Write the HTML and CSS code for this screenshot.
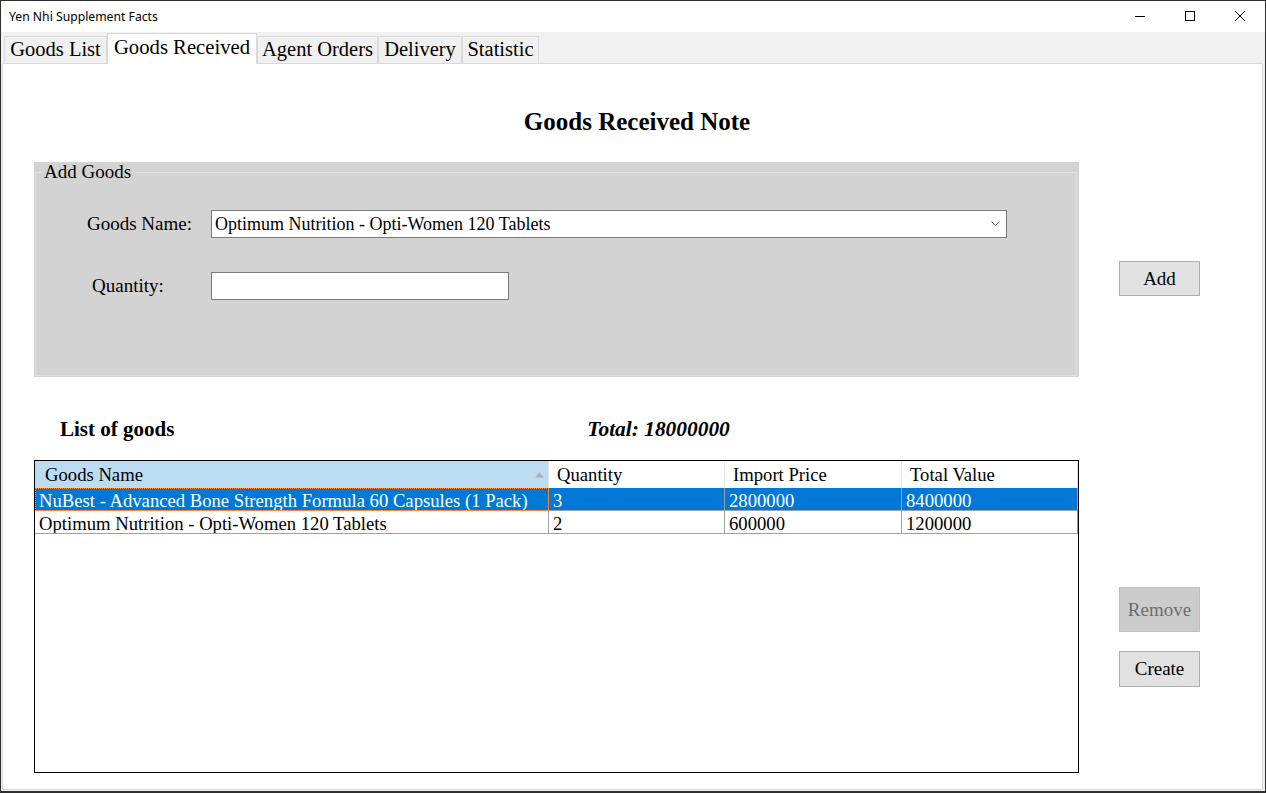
FILE: index.html
```html
<!DOCTYPE html>
<html>
<head>
<meta charset="utf-8">
<title>Yen Nhi Supplement Facts</title>
<link rel="stylesheet" href="styles.css">
</head>
<body>
<div class="window">
  <div class="titlebar">
    <span class="title">Yen Nhi Supplement Facts</span>
    <div class="controls">
      <span class="ctl"><svg width="12" height="12" viewBox="0 0 12 12"><line x1="1" y1="6.5" x2="11" y2="6.5" stroke="#000" stroke-width="1"/></svg></span>
      <span class="ctl"><svg width="12" height="12" viewBox="0 0 12 12"><rect x="1.5" y="1.5" width="9" height="9" fill="none" stroke="#000" stroke-width="1"/></svg></span>
      <span class="ctl"><svg width="12" height="12" viewBox="0 0 12 12"><path d="M1 1 L11 11 M11 1 L1 11" stroke="#000" stroke-width="1"/></svg></span>
    </div>
  </div>
  <div class="tabstrip">
    <div class="tab t1">Goods List</div>
    <div class="tab t2 active">Goods Received</div>
    <div class="tab t3">Agent Orders</div>
    <div class="tab t4">Delivery</div>
    <div class="tab t5">Statistic</div>
  </div>
  <div class="page">
    <h1 class="heading">Goods Received Note</h1>
    <div class="main">
      <div class="left">
        <div class="groupbox">
          <fieldset class="fs">
            <legend class="legend">Add Goods</legend>
            <div class="form">
              <div class="frow r1">
                <label class="lbl">Goods Name:</label>
                <div class="select">
                  <span class="select-text">Optimum Nutrition - Opti-Women 120 Tablets</span>
                  <svg class="chev" width="9" height="6" viewBox="0 0 9 6"><path d="M0.5 0.5 L4.5 4.5 L8.5 0.5" fill="none" stroke="#606060" stroke-width="1"/></svg>
                </div>
              </div>
              <div class="frow r2">
                <label class="lbl lbl-q">Quantity:</label>
                <div class="input"></div>
              </div>
            </div>
          </fieldset>
        </div>
        <div class="listhead">
          <span class="list-title">List of goods</span>
          <span class="total">Total: 18000000</span>
        </div>
        <div class="grid">
          <table class="tbl">
            <colgroup><col class="c1"><col class="c2"><col class="c3"><col class="c4"></colgroup>
            <thead>
              <tr>
                <th class="sorted">Goods Name<svg class="sort" width="9" height="6" viewBox="0 0 9 6"><polygon points="0,5.5 9,5.5 4.5,0.5" fill="#b0b0b0"/></svg></th>
                <th>Quantity</th>
                <th>Import Price</th>
                <th>Total Value</th>
              </tr>
            </thead>
            <tbody>
              <tr class="sel">
                <td class="focus">NuBest - Advanced Bone Strength Formula 60 Capsules (1 Pack)</td>
                <td>3</td>
                <td>2800000</td>
                <td>8400000</td>
              </tr>
              <tr>
                <td>Optimum Nutrition - Opti-Women 120 Tablets</td>
                <td>2</td>
                <td>600000</td>
                <td>1200000</td>
              </tr>
            </tbody>
          </table>
        </div>
      </div>
      <div class="side">
        <button class="btn b-add">Add</button>
        <button class="btn b-remove" disabled>Remove</button>
        <button class="btn b-create">Create</button>
      </div>
    </div>
  </div>
</div>
</body>
</html>
```
FILE: styles.css
```css
* { box-sizing: border-box; }
html, body { margin: 0; padding: 0; background: #fff; }
body { font-family: "Liberation Serif", "Times New Roman", serif; color: #000; }

.window {
  width: 1266px;
  height: 793px;
  border: 1px solid #2e2e2e;
  border-bottom-width: 2px;
  display: flex;
  flex-direction: column;
  background: #f0f0f0;
  overflow: hidden;
}

.titlebar {
  height: 31px;
  flex: 0 0 31px;
  background: #fff;
  display: flex;
  align-items: center;
  justify-content: space-between;
}
.title {
  font-family: "Segoe UI", "Noto Sans", "DejaVu Sans", sans-serif;
  font-size: 12.2px;
  padding-left: 8px;
  padding-bottom: 1px;
  color: #000;
}
.controls { display: flex; height: 100%; }
.ctl {
  width: 50px;
  height: 100%;
  display: flex;
  align-items: center;
  justify-content: center;
  padding-bottom: 1px;
}

.tabstrip {
  height: 31px;
  flex: 0 0 31px;
  display: flex;
  align-items: flex-end;
  padding-left: 3px;
  background: #f0f0f0;
  position: relative;
  z-index: 2;
}
.tab {
  height: 27px;
  border: 1px solid #d9d9d9;
  border-bottom: none;
  background: #f0f0f0;
  font-size: 20.5px;
  line-height: 25px;
  text-align: center;
  white-space: nowrap;
}
.t1 { width: 103px; }
.t2 { width: 150px; }
.t3 { width: 121px; }
.t4 { width: 84px; }
.t5 { width: 77px; }
.tab.active {
  height: 31px;
  margin-bottom: -1px;
  background: #fff;
  line-height: 27px;
  font-size: 20.7px;
}

.page {
  flex: 1;
  background: #fff;
  border: 1px solid #d9d9d9;
  margin: 0 2px 1px 1px;
  padding-left: 31px;
}

.heading {
  margin: 0;
  padding: 44px 0 0 9px;
  margin-left: -31px;
  font-size: 25px;
  line-height: 28px;
  font-weight: bold;
  text-align: center;
  margin-bottom: 26px;
}

.main { display: flex; }
.left { width: 1045px; flex: 0 0 1045px; }

.groupbox {
  background: #d3d3d3;
  height: 215px;
  padding: 0 2px 1px 1px;
}
.fs {
  margin: 0;
  height: 100%;
  border: 1px solid #e0e0e0;
  padding: 0 0 0 6px;
  min-width: 0;
}
.legend {
  font-size: 19px;
  line-height: 20px;
  padding: 0 2px;
}
.form { padding-left: 45px; padding-top: 28px; }
.frow { display: flex; align-items: center; height: 28px; }
.r2 { margin-top: 34px; }
.lbl { width: 124px; font-size: 19px; line-height: 22px; }
.lbl-q { padding-left: 5px; }
.select {
  width: 796px;
  height: 28px;
  border: 1px solid #7a7a7a;
  background: #fff;
  display: flex;
  align-items: center;
  justify-content: space-between;
  padding: 0 6px 0 3px;
}
.select-text { font-size: 18px; line-height: 22px; }
.input {
  width: 298px;
  height: 28px;
  border: 1px solid #7a7a7a;
  background: #fff;
}

.listhead {
  margin-top: 40px;
  height: 24px;
  display: flex;
  align-items: center;
  padding-left: 26px;
  font-weight: bold;
  font-size: 21px;
  line-height: 24px;
}
.total { font-style: italic; font-size: 21.4px; margin-left: 413px; }

.grid {
  margin-top: 19px;
  height: 313px;
  border: 1px solid #000;
  background: #fff;
}
.tbl {
  border-collapse: separate;
  border-spacing: 0;
  table-layout: fixed;
  width: 1043px;
  font-size: 18.67px;
}
.c1 { width: 514px; }
.c2 { width: 176px; }
.c3 { width: 177px; }
.c4 { width: 176px; }
.tbl th {
  height: 27px;
  font-weight: normal;
  text-align: left;
  padding: 0 0 0 8px;
  border-right: 1px solid #e5e5e5;
  line-height: 22px;
  white-space: nowrap;
}
.tbl th.sorted {
  background: #bcdcf4;
  padding-left: 10px;
  position: relative;
}
.sort { position: absolute; right: 4px; top: 11px; }
.tbl td {
  height: 23px;
  padding: 4px 0 0 4px;
  border-right: 1px solid #a0a0a0;
  border-bottom: 1px solid #a0a0a0;
  line-height: 18px;
  white-space: nowrap;
  overflow: hidden;
}
.tbl tr.sel td { background: #0078d7; color: #fff; }
.tbl td.focus { outline: 1px dotted #ff8728; outline-offset: -1px; }

.side {
  margin-left: 40px;
  padding-top: 99px;
  display: flex;
  flex-direction: column;
}
.btn {
  width: 81px;
  font-family: "Liberation Serif", "Times New Roman", serif;
  font-size: 19px;
  background: #e1e1e1;
  border: 1px solid #adadad;
  color: #000;
  padding: 0;
}
.b-add { height: 35px; }
.b-remove {
  height: 45px;
  margin-top: 291px;
  background: #cccccc;
  border-color: #bfbfbf;
  color: #6d6d6d;
}
.b-create { height: 36px; margin-top: 19px; }
```
